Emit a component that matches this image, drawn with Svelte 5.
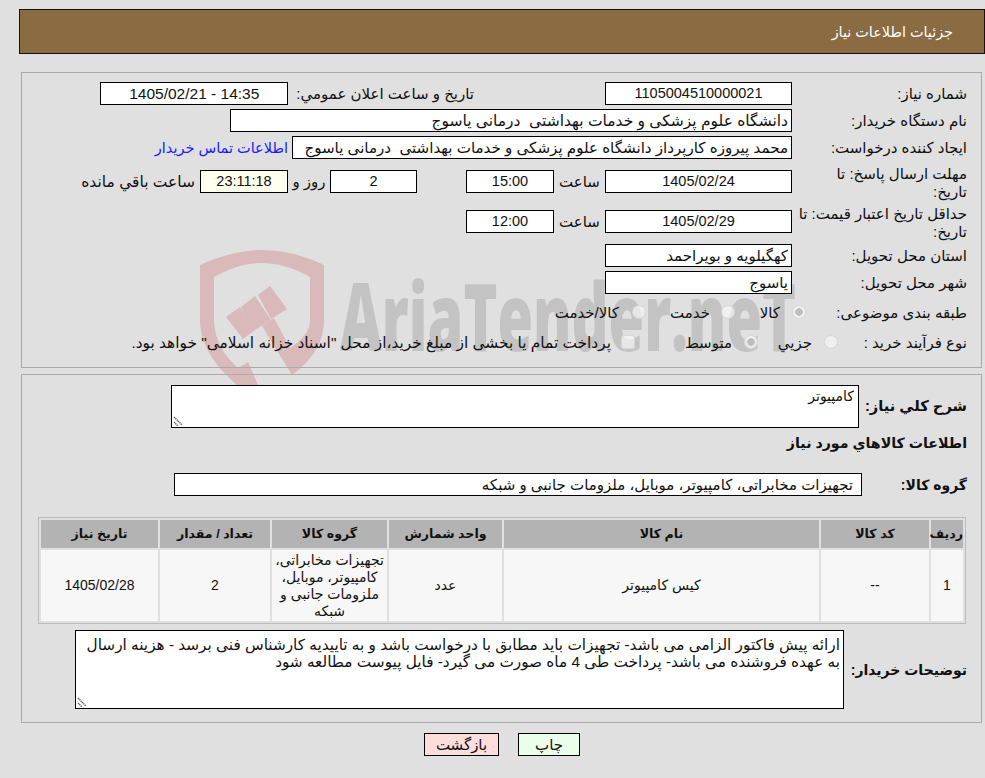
<script>
  const columns = [
    { label: 'رديف', width: 32 },
    { label: 'کد کالا', width: 108 },
    { label: 'نام کالا', width: 315 },
    { label: 'واحد شمارش', width: 113 },
    { label: 'گروه کالا', width: 115 },
    { label: 'تعداد / مقدار', width: 110 },
    { label: 'تاریخ نیاز', width: 117 }
  ];
  const cells = ['1', '--', 'کیس کامپیوتر', 'عدد', 'تجهیزات مخابراتی، کامپیوتر، موبایل، ملزومات جانبی و شبکه', '2', '1405/02/28'];
</script>

<div class="page" dir="rtl">
  <svg class="mark" width="620" height="170" viewBox="0 0 620 170" aria-hidden="true">
    <path class="shield" d="M62 0C40 0 20 6 0 15L0 72C1 100 22 125 50 145L58 135L48 112L38 118C24 106 15 90 14 72L14 27C30 18 46 13 62 13Z"/>
    <path class="shield" d="M62 0C84 0 105 6 124 15L124 72C123 95 110 112 92 125L62 76L74 68L90 98C102 90 109 82 110 72L110 27C94 18 78 13 62 13Z"/>
    <polygon class="shield" points="70,36 87,59 71,69 58,45"/>
    <polygon class="shield" points="55,46 71,70 53,81 41,57"/>
    <polygon class="shield" points="40,57 55,80 43,89 26,67"/>
    <text class="brand" x="140" y="101" textLength="456" lengthAdjust="spacingAndGlyphs">AriaTender.neT</text>
  </svg>

  <header class="title">جزئیات اطلاعات نیاز</header>

  <section class="panel top">
    <div class="row r1">
      <span class="label">شماره نیاز:</span>
      <div class="box date num">1105004510000021</div>
      <span class="label pub">تاریخ و ساعت اعلان عمومي:</span>
      <div class="box pubv">1405/02/21 - 14:35</div>
    </div>
    <div class="row r2">
      <span class="label">نام دستگاه خریدار:</span>
      <div class="box start buyer">دانشگاه علوم پزشکی و خدمات بهداشتی&nbsp; درمانی یاسوج</div>
    </div>
    <div class="row r2">
      <span class="label">ایجاد کننده درخواست:</span>
      <div class="box start creator">محمد پیروزه کارپرداز دانشگاه علوم پزشکی و خدمات بهداشتی&nbsp; درمانی یاسوج</div>
      <a class="contact" href="#contact">اطلاعات تماس خریدار</a>
    </div>
    <div class="row r4">
      <span class="label two">مهلت ارسال پاسخ: تا<br />تاریخ:</span>
      <div class="box date num">1405/02/24</div>
      <span class="hour">ساعت</span>
      <div class="box time num">15:00</div>
      <div class="box days num">2</div>
      <span class="rooz">روز و</span>
      <div class="box timer num">23:11:18</div>
      <span class="left">ساعت باقي مانده</span>
    </div>
    <div class="row r5">
      <span class="label two">حداقل تاریخ اعتبار قیمت: تا<br />تاریخ:</span>
      <div class="box date num">1405/02/29</div>
      <span class="hour">ساعت</span>
      <div class="box time num">12:00</div>
    </div>
    <div class="row r6">
      <span class="label">استان محل تحویل:</span>
      <div class="box date start">کهگیلویه و بویراحمد</div>
    </div>
    <div class="row r2">
      <span class="label">شهر محل تحویل:</span>
      <div class="box date start">یاسوج</div>
    </div>
    <div class="row r8">
      <span class="label l8">طبقه بندی موضوعی:</span>
      <span class="radio on"></span><span class="opt o1">کالا</span>
      <span class="radio"></span><span class="opt o2">خدمت</span>
      <span class="radio"></span><span class="opt o3">کالا/خدمت</span>
    </div>
    <div class="row r9">
      <span class="label l9">نوع فرآیند خرید :</span>
      <span class="radio"></span><span class="opt o4">جزيي</span>
      <span class="radio on"></span><span class="opt o5">متوسط</span>
      <span class="check"></span><span class="opt o6">پرداخت تمام یا بخشی از مبلغ خرید،از محل "اسناد خزانه اسلامی" خواهد بود.</span>
    </div>
  </section>

  <section class="panel bottom">
    <div class="row desc">
      <span class="label strong w1">شرح کلي نياز:</span>
      <div class="area summary">کامپیوتر
        <svg class="grip" width="10" height="10" viewBox="0 0 10 10"><path d="M1 1L9 9M1 6L5 10" stroke="#666" stroke-width="1.4" stroke-dasharray="1.4 .5"/></svg>
      </div>
    </div>
    <h2 class="items">اطلاعات کالاهاي مورد نياز</h2>
    <div class="row grp">
      <span class="label strong w2">گروه کالا:</span>
      <div class="box start group">تجهیزات مخابراتی، کامپیوتر، موبایل، ملزومات جانبی و شبکه</div>
    </div>
    <table>
      <colgroup>
        {#each columns as c}<col style="width:{c.width}px" />{/each}
      </colgroup>
      <thead>
        <tr>{#each columns as c}<th>{c.label}</th>{/each}</tr>
      </thead>
      <tbody>
        <tr>{#each cells as c}<td>{c}</td>{/each}</tr>
      </tbody>
    </table>
    <div class="row notes">
      <span class="label strong w3">توضیحات خریدار:</span>
      <div class="area remarks">ارائه پیش فاکتور الزامی می باشد- تجهیزات باید مطابق با درخواست باشد و به تاییدیه کارشناس فنی برسد - هزینه ارسال به عهده فروشنده می باشد- پرداخت طی 4 ماه صورت می گیرد- فایل پیوست مطالعه شود
        <svg class="grip" width="10" height="10" viewBox="0 0 10 10"><path d="M1 1L9 9M1 6L5 10" stroke="#666" stroke-width="1.4" stroke-dasharray="1.4 .5"/></svg>
      </div>
    </div>
  </section>

  <div class="actions">
    <button class="print">چاپ</button>
    <button class="back">بازگشت</button>
  </div>
</div>

<style>
  :global(body) {
    margin: 0;
    background: #e0e0e0;
  }
  .page {
    position: relative;
    width: 985px;
    height: 778px;
    box-sizing: border-box;
    padding-top: 9px;
    overflow: hidden;
    color: #111;
    font-family: "Liberation Sans", "DejaVu Sans", sans-serif;
    font-size: 15px;
    line-height: 18px;
  }
  .mark {
    position: absolute;
    left: 200px;
    top: 250px;
    direction: ltr;
  }
  .shield { fill: #d9b9ba; }
  .brand {
    direction: ltr;
    fill: #c3c3c3;
    font-family: "Open Sans", sans-serif;
    font-size: 94px;
    font-weight: 800;
  }
  .title {
    position: relative;
    box-sizing: border-box;
    width: 966px;
    height: 45px;
    padding: 13px 31px 0 0;
    background: #8b6c42;
    border: 1px solid #111;
    color: #fff;
    font-size: 14.4px;
  }
  .panel {
    position: relative;
    box-sizing: border-box;
    width: 961px;
    margin-right: 3px;
    border: 1px solid #aaa;
    padding-right: 14px;
  }
  .top {
    height: 296px;
    margin-top: 18px;
    padding-top: 9px;
  }
  .bottom {
    height: 349px;
    margin-top: 6px;
    padding-top: 10px;
  }
  .row {
    display: flex;
    align-items: center;
  }
  .r1 { height: 23px; }
  .r2 { height: 23px; margin-top: 4px; }
  .r4 { height: 23px; margin-top: 11px; }
  .r5 { height: 23px; margin-top: 17px; }
  .r6 { height: 23px; margin-top: 11px; }
  .r8 { height: 20px; margin-top: 9px; }
  .r9 { height: 20px; margin-top: 10px; }
  .label {
    flex: none;
    width: 175px;
    white-space: nowrap;
  }
  .two { padding-top: 3px; }
  .l8 { width: 161px; }
  .l9 { width: 129px; }
  .box {
    flex: none;
    box-sizing: border-box;
    height: 23px;
    line-height: 21px;
    background: #fff;
    border: 1px solid #000;
    text-align: center;
    white-space: nowrap;
    overflow: hidden;
  }
  .num { font-size: 14.5px; }
  .start {
    text-align: right;
    padding-right: 3px;
  }
  .date { width: 187px; }
  .pub { width: auto; margin-right: 131px; }
  .pubv { width: 188px; margin-right: 8px; direction: ltr; font-size: 15.5px; }
  .buyer { width: 562px; font-size: 15.5px; }
  .creator { width: 500px; font-size: 15.1px; }
  .contact {
    margin-right: 4px;
    color: #1a1aff;
    font-size: 14.5px;
    text-decoration: none;
    white-space: nowrap;
  }
  .hour { width: 51px; text-align: center; }
  .time { width: 88px; }
  .days { width: 87px; margin-right: 49px; }
  .rooz { width: 42px; text-align: center; }
  .timer { width: 88px; background: #ffffee; }
  .left { margin-right: 5px; white-space: nowrap; font-size: 15.5px; }
  .radio, .check {
    flex: none;
    box-sizing: border-box;
    width: 14px;
    height: 14px;
    margin-bottom: 2px;
    background: rgba(246, 246, 246, 0.7);
    border: 1px solid rgba(205, 205, 205, 0.7);
  }
  .radio { border-radius: 50%; }
  .radio.on {
    background: radial-gradient(circle, #bdbdbd 0 3.5px, rgba(246, 246, 246, 0.8) 4px);
  }
  .check { border-radius: 3px; }
  .opt {
    flex: none;
    box-sizing: content-box;
    margin-right: 12px;
    white-space: nowrap;
  }
  .o1 { width: 45px; }
  .o2 { width: 64px; margin-right: 11px; }
  .o3 { margin-right: 13px; }
  .o4 { width: 54px; }
  .o5 { width: 97px; }
  .o6 { margin-right: 10px; font-size: 15.4px; }
  .desc { align-items: flex-start; }
  .strong {
    font-weight: 700;
    font-size: 14px;
  }
  .w1 { width: 108px; padding-top: 12px; font-size: 14.7px; }
  .area {
    position: relative;
    flex: none;
    box-sizing: border-box;
    background: #fff;
    border: 1px solid #000;
    padding: 1px 4px;
    text-align: right;
    font-size: 14px;
  }
  .summary { width: 688px; height: 43px; }
  .remarks { width: 769px; height: 79px; padding: 5px 3px; line-height: 17px; font-size: 15.3px; }
  .grip {
    position: absolute;
    left: 1px;
    bottom: 1px;
  }
  .items {
    margin: 6px 0 0;
    height: 18px;
    font-size: 14.2px;
    line-height: 18px;
    font-weight: 700;
  }
  .grp { margin-top: 21px; }
  .w2 { width: 105px; }
  .group { width: 688px; padding-right: 8px; }
  table {
    width: 928px;
    margin: 21px 1px 0 0;
    table-layout: fixed;
    border: 1px solid #bbb;
    border-spacing: 2px;
    border-collapse: separate;
    text-align: center;
  }
  th {
    height: 28px;
    padding: 0;
    background: #b3b3b3;
    font-size: 12.6px;
    font-weight: 700;
  }
  td {
    height: 71px;
    padding: 0;
    background: #f7f7f7;
    font-size: 14px;
    line-height: 17px;
  }
  .notes { margin-top: 6px; align-items: center; }
  .w3 { width: 123px; }
  .actions {
    position: relative;
    display: flex;
    justify-content: flex-start;
    gap: 19px;
    margin-top: 10px;
    margin-right: 405px;
  }
  button {
    box-sizing: border-box;
    height: 23px;
    padding: 0;
    border: 1px solid #000;
    color: #111;
    font: inherit;
  }
  .print { width: 62px; background: #eaffea; }
  .back { width: 75px; background: #ffdddd; }
</style>
